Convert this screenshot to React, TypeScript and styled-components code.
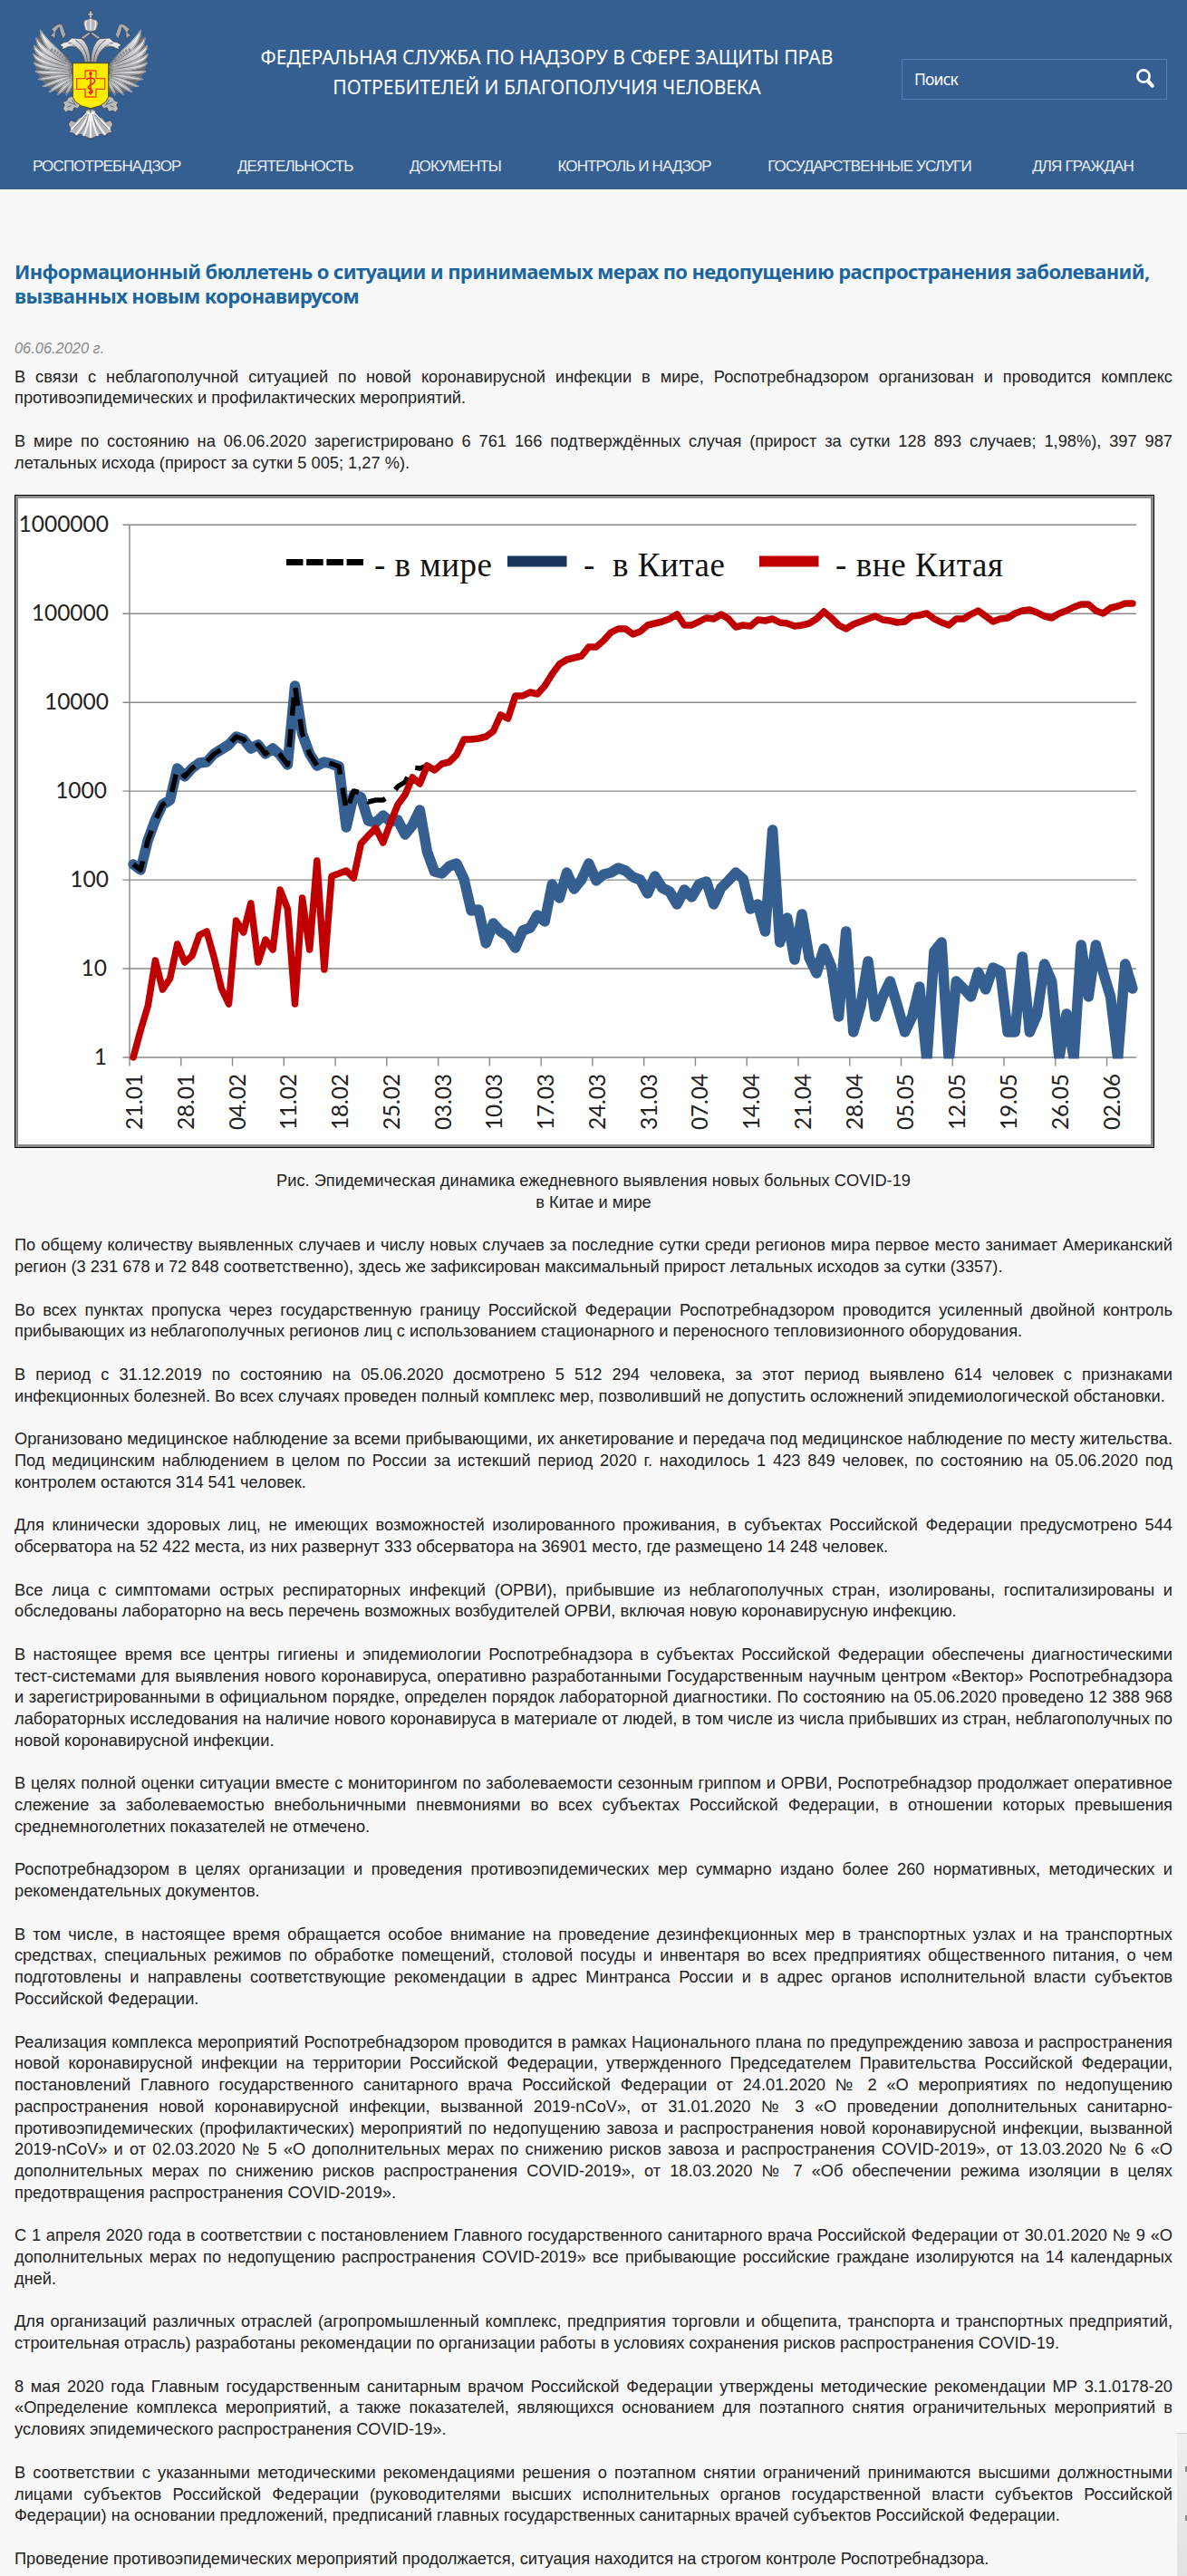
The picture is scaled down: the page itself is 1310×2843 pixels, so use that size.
import React from 'react';
import styled, { createGlobalStyle } from 'styled-components';

const GlobalStyle = createGlobalStyle`
  body {
    margin: 0;
    background: #f8f8f8;
    color: #222;
    font-family: 'Liberation Sans', Arial, sans-serif;
  }
`;

const menu = ['Роспотребнадзор', 'Деятельность', 'Документы', 'Контроль и надзор', 'Государственные услуги', 'Для граждан'];

const intro = [
  'В связи с неблагополучной ситуацией по новой коронавирусной инфекции в мире, Роспотребнадзором организован и проводится комплекс противоэпидемических и профилактических мероприятий.',
  'В мире по состоянию на 06.06.2020 зарегистрировано 6 761 166 подтверждённых случая (прирост за сутки 128 893 случаев; 1,98%), 397 987 летальных исхода (прирост за сутки 5 005; 1,27 %).',
];

const paragraphs = [
  'По общему количеству выявленных случаев и числу новых случаев за последние сутки среди регионов мира первое место занимает Американский регион (3 231 678 и 72 848 соответственно), здесь же зафиксирован максимальный прирост летальных исходов за сутки (3357).',
  'Во всех пунктах пропуска через государственную границу Российской Федерации Роспотребнадзором проводится усиленный двойной контроль прибывающих из неблагополучных регионов лиц с использованием стационарного и переносного тепловизионного оборудования.',
  'В период с 31.12.2019 по состоянию на 05.06.2020 досмотрено 5 512 294 человека, за этот период выявлено 614 человек с признаками инфекционных болезней. Во всех случаях проведен полный комплекс мер, позволивший не допустить осложнений эпидемиологической обстановки.',
  'Организовано медицинское наблюдение за всеми прибывающими, их анкетирование и передача под медицинское наблюдение по месту жительства. Под медицинским наблюдением в целом по России за истекший период 2020 г. находилось 1 423 849 человек, по состоянию на 05.06.2020 под контролем остаются 314 541 человек.',
  'Для клинически здоровых лиц, не имеющих возможностей изолированного проживания, в субъектах Российской Федерации предусмотрено 544 обсерватора на 52 422 места, из них развернут 333 обсерватора на 36901 место, где размещено 14 248 человек.',
  'Все лица с симптомами острых респираторных инфекций (ОРВИ), прибывшие из неблагополучных стран, изолированы, госпитализированы и обследованы лабораторно на весь перечень возможных возбудителей ОРВИ, включая новую коронавирусную инфекцию.',
  'В настоящее время все центры гигиены и эпидемиологии Роспотребнадзора в субъектах Российской Федерации обеспечены диагностическими тест-\u2060системами для выявления нового коронавируса, оперативно разработанными Государственным научным центром «Вектор» Роспотребнадзора и зарегистрированными в официальном порядке, определен порядок лабораторной диагностики. По состоянию на 05.06.2020 проведено 12 388 968 лабораторных исследования на наличие нового коронавируса в материале от людей, в том числе из числа прибывших из стран, неблагополучных по новой коронавирусной инфекции.',
  'В целях полной оценки ситуации вместе с мониторингом по заболеваемости сезонным гриппом и ОРВИ, Роспотребнадзор продолжает оперативное слежение за заболеваемостью внебольничными пневмониями во всех субъектах Российской Федерации, в отношении которых превышения среднемноголетних показателей не отмечено.',
  'Роспотребнадзором в целях организации и проведения противоэпидемических мер суммарно издано более 260 нормативных, методических и рекомендательных документов.',
  'В том числе, в настоящее время обращается особое внимание на проведение дезинфекционных мер в транспортных узлах и на транспортных средствах, специальных режимов по обработке помещений, столовой посуды и инвентаря во всех предприятиях общественного питания, о чем подготовлены и направлены соответствующие рекомендации в адрес Минтранса России и в адрес органов исполнительной власти субъектов Российской Федерации.',
  'Реализация комплекса мероприятий Роспотребнадзором проводится в рамках Национального плана по предупреждению завоза и распространения новой коронавирусной инфекции на территории Российской Федерации, утвержденного Председателем Правительства Российской Федерации, постановлений Главного государственного санитарного врача Российской Федерации от 24.01.2020 № 2 «О мероприятиях по недопущению распространения новой коронавирусной инфекции, вызванной 2019-nCoV», от 31.01.2020 № 3 «О проведении дополнительных санитарно-противоэпидемических (профилактических) мероприятий по недопущению завоза и распространения новой коронавирусной инфекции, вызванной 2019-nCoV» и от 02.03.2020 № 5 «О дополнительных мерах по снижению рисков завоза и распространения COVID-2019», от 13.03.2020 № 6 «О дополнительных мерах по снижению рисков распространения COVID-2019», от 18.03.2020 № 7 «Об обеспечении режима изоляции в целях предотвращения распространения COVID-2019».',
  'С 1 апреля 2020 года в соответствии с постановлением Главного государственного санитарного врача Российской Федерации от 30.01.2020 № 9 «О дополнительных мерах по недопущению распространения COVID-2019» все прибывающие российские граждане изолируются на 14 календарных дней.',
  'Для организаций различных отраслей (агропромышленный комплекс, предприятия торговли и общепита, транспорта и транспортных предприятий, строительная отрасль) разработаны рекомендации по организации работы в условиях сохранения рисков распространения COVID-19.',
  '8 мая 2020 года Главным государственным санитарным врачом Российской Федерации утверждены методические рекомендации МР 3.1.0178-20 «Определение комплекса мероприятий, а также показателей, являющихся основанием для поэтапного снятия ограничительных мероприятий в условиях эпидемического распространения COVID-19».',
  'В соответствии с указанными методическими рекомендациями решения о поэтапном снятии ограничений принимаются высшими должностными лицами субъектов Российской Федерации (руководителями высших исполнительных органов государственной власти субъектов Российской Федерации) на основании предложений, предписаний главных государственных санитарных врачей субъектов Российской Федерации.',
  'Проведение противоэпидемических мероприятий продолжается, ситуация находится на строгом контроле Роспотребнадзора.',
];

// one point per day starting from 21.01, vertical position on the log scale
const china = [
  954, 960, 927, 905, 888, 883, 848, 857, 848, 842, 841, 832, 827, 822, 813, 816, 826, 822, 832, 826, 833, 844, 757, 810,
  832, 845, 841, 843, 846, 913, 877, 880, 906, 908, 900, 907, 905, 921, 911, 894, 940, 962, 964, 956, 953, 970, 1005, 1004,
  1041, 1019, 1028, 1033, 1046, 1027, 1024, 1010, 1017, 976, 991, 963, 981, 971, 953, 972, 965, 963, 958, 961, 968, 971,
  986, 967, 980, 984, 998, 982, 990, 976, 973, 998, 980, 972, 963, 970, 1003, 998, 1028, 916, 1040, 1013, 1059, 1009,
  1057, 1074, 1047, 1067, 1122, 1028, 1139, 1110, 1061, 1122, 1100, 1083, 1110, 1139, 1122, 1089, 1170, 1050, 1040, 1170,
  1083, 1091, 1100, 1073, 1092, 1068, 1072, 1139, 1139, 1056, 1139, 1120, 1064, 1083, 1168, 1119, 1168, 1043, 1100, 1043,
  1073, 1100, 1168, 1064, 1091,
];

const outside = [
  1167, 1137, 1110, 1060, 1092, 1080, 1042, 1062, 1055, 1032, 1028, 1057, 1091, 1108, 1016, 1029, 997, 1062, 1037, 1048,
  982, 1003, 1108, 991, 1048, 950, 1070, 967, 964, 961, 969, 931, 922, 914, 930, 908, 888, 877, 858, 865, 845, 850, 843,
  841, 833, 816, 816, 815, 813, 807, 789, 793, 768, 768, 764, 766, 757, 744, 733, 728, 726, 724, 714, 714, 707, 698, 694,
  694, 700, 697, 690, 688, 686, 683, 678, 690, 690, 686, 682, 683, 678, 683, 692, 690, 691, 684, 685, 683, 687, 688, 691,
  690, 688, 683, 675, 682, 690, 694, 689, 686, 683, 680, 684, 685, 687, 686, 680, 679, 677, 683, 687, 690, 683, 683, 678,
  674, 680, 686, 683, 682, 677, 674, 673, 676, 680, 682, 677, 674, 670, 667, 667, 674, 677, 671, 669, 666, 666,
];

const world = [...china.slice(0, 29), 895, 873, 875, 885, 883, 883, 878, 868, 863, 847, 848, ...outside.slice(40, 46)];

const dates = [
  '21.01', '28.01', '04.02', '11.02', '18.02', '25.02', '03.03', '10.03', '17.03', '24.03',
  '31.03', '07.04', '14.04', '21.04', '28.04', '05.05', '12.05', '19.05', '26.05', '02.06',
];

const PLOT = { left: 143, right: 1254, top: 579.3, bottom: 1167 };
const DAY = (PLOT.right - PLOT.left) / 137;
const DECADE = (PLOT.bottom - PLOT.top) / 6;

const toPoints = (series: number[]) => series.map((y, i) => `${(PLOT.left + (i + 0.5) * DAY).toFixed(1)},${y}`).join(' ');

const EpidemicChart = () => (
  <Chart viewBox="20 550 1250 713">
    <defs>
      <clipPath id="plot">
        <rect x="130" y="560" width="1140" height="608.5" />
      </clipPath>
    </defs>
    {[0, 1, 2, 3, 4, 5, 6].map((power) => {
      const y = PLOT.bottom - power * DECADE;
      return (
        <g key={power}>
          <line className="grid" x1={135.5} x2={PLOT.right} y1={y} y2={y} />
          <text className="scale" x={power === 3 || power < 2 ? 118 : 120} y={y + 8} textAnchor="end">
            {10 ** power}
          </text>
        </g>
      );
    })}
    <line className="grid" x1={PLOT.left} x2={PLOT.left} y1={PLOT.top} y2={PLOT.bottom} />
    {dates.map((date, i) => {
      const x = PLOT.left + i * 7 * DAY;
      return (
        <g key={date}>
          <line className="grid" x1={x} x2={x} y1={PLOT.bottom} y2={PLOT.bottom + 9.5} />
          <text className="scale" transform={`translate(${x + 14} 1185) rotate(-90)`} textAnchor="end" textLength="62">
            {date}
          </text>
        </g>
      );
    })}
    <g clipPath="url(#plot)">
      <polyline className="china" points={toPoints(china)} />
    </g>
    <polyline className="world" points={toPoints(world)} />
    <polyline className="outside" points={toPoints(outside)} />

    <line x1="316" x2="401" y1="620.5" y2="620.5" stroke="#000" strokeWidth="7" strokeDasharray="18.5 3.7" />
    <rect x="560" y="613.5" width="65.5" height="12" fill="#1a365d" />
    <rect x="838" y="613.5" width="65.5" height="12" fill="#c00000" />
    <text className="legend" x="413" y="636" textLength="130">- в мире</text>
    <text className="legend" x="644" y="636">-</text>
    <text className="legend" x="676" y="636" textLength="124">в Китае</text>
    <text className="legend" x="922" y="636" textLength="185">- вне Китая</text>
  </Chart>
);

const feathers = [
  'M74 100 C78 140 108 178 160 206 C152 170 104 150 74 100Z',
  'M60 126 C62 160 100 192 168 214 C150 184 86 172 60 126Z',
  'M53 152 C56 184 100 208 170 222 C150 198 84 190 53 152Z',
  'M51 180 C58 206 104 222 172 230 C150 212 84 208 51 180Z',
  'M53 208 C66 228 110 232 172 238 C150 222 92 224 53 208Z',
  'M58 236 C76 248 118 244 174 246 C150 230 98 238 58 236Z',
  'M68 262 C86 268 130 256 176 250 C150 242 106 252 68 262Z',
  'M82 286 C102 286 140 268 178 254 C150 252 116 268 82 286Z',
  'M104 304 C122 298 152 278 180 258 C154 262 126 282 104 304Z',
  'M132 312 C146 302 166 282 182 264 C162 272 142 292 132 312Z',
  'M160 312 C168 300 178 284 184 268 C172 278 162 298 160 312Z',
];

// left half of the eagle, mirrored for the right one
const EagleHalf = () => (
  <g stroke="#34383f" strokeWidth="2" strokeLinejoin="round">
    <path d="M76 102 Q112 160 152 180 Q180 206 184 240 V300 Q150 318 118 300 Q70 270 56 220 Q48 160 76 102Z" fill="#6b6d72" stroke="none" />
    {feathers.map((d) => (
      <path key={d} d={d} fill="url(#silver)" stroke="#e2e3e5" strokeWidth="4" />
    ))}
    {feathers.map((d) => (
      <path key={d} d={d} fill="none" stroke="#4a4d53" strokeWidth="1.6" />
    ))}
    <path d="M108 164 Q150 180 180 226" fill="none" stroke="#8a8c90" strokeWidth="10" strokeDasharray="7 4" />
    <path d="M106 120 L118 106 L110 96 L128 82 Q146 74 150 92 L158 116 L148 128 L140 108 L136 90 L124 104 L122 132 L116 122Z" fill="#a8abb0" />
    <path d="M219 206 Q214 172 192 158 Q174 148 156 160 L144 164 L148 155 L138 150 Q150 138 164 138 L178 126 L210 128 Q238 148 240 206Z" fill="url(#silver)" />
    <path d="M166 142 L178 144 M190 132 Q224 152 230 204 M180 148 Q214 164 222 204" fill="none" stroke="#686b70" strokeWidth="3" />
    <path d="M208 124 L234 106 L240 112 L216 130Z" fill="#a9abb0" />
    <path d="M180 318 L190 326 L206 346 L198 360 L186 356 L180 370 L166 366 L158 372 L148 360 L154 348 L148 338 L162 332 L164 324Z" fill="#b9bbc0" />
    <path d="M166 338 L188 346 M164 354 L176 350 M178 330 L192 350" fill="none" />
    <path d="M240 360 L222 366 L226 382 L202 390 L190 404 L174 398 L166 412 L174 426 L168 438 L184 442 L192 450 L206 444 L222 452 L240 460Z" fill="#b3b5ba" />
    <path d="M236 370 Q226 402 192 446 M238 374 Q232 420 216 450 M232 370 Q208 398 176 428 M240 374 V456" fill="none" stroke="#f3f3f3" strokeWidth="6" />
    <path d="M233 378 Q226 418 203 444 M228 376 Q210 400 184 426" fill="none" stroke="#606368" />
  </g>
);

const Emblem = () => (
  <EmblemSvg viewBox="0 0 480 480">
    <defs>
      <linearGradient id="silver" x1="0" y1="0" x2="1" y2="1">
        <stop offset="0" stopColor="#fff" />
        <stop offset="1" stopColor="#999ba0" />
      </linearGradient>
    </defs>
    <EagleHalf />
    <g transform="translate(480 0) scale(-1 1)">
      <EagleHalf />
    </g>
    <g stroke="#3b3e44" strokeWidth="2">
      <path d="M236 62 V51 H231 V44 H236 V36 H244 V44 H249 V51 H244 V62Z" fill="#bfc1c5" />
      <path d="M222 100 L216 78 Q216 66 230 64 L240 60 L250 64 Q266 66 265 80 L258 100 Q240 110 222 100Z" fill="#b5b7bb" />
      <path d="M226 68 Q220 80 228 98 M254 68 Q260 80 252 98 M240 62 V100" fill="none" stroke="#eee" strokeWidth="4" />
    </g>
    <path d="M181 209 H299 V322 Q294 338 272 350 L240 359 L208 350 Q186 338 181 322Z" fill="#ffed00" stroke="#4d4a18" strokeWidth="3" />
    <path d="M222 234 H258 V260 H287 V295 H258 V321 H222 V295 H194 V260 H222Z" fill="none" stroke="#f04a12" strokeWidth="4" />
    <circle cx="240" cy="243" r="5" fill="#d30d0d" />
    <path d="M240 242 V314 M226 264 Q234 254 248 260 Q262 268 246 278 Q224 288 236 294 Q252 300 244 307 Q238 312 234 304" fill="none" stroke="#e3200e" strokeWidth="4.5" />
  </EmblemSvg>
);

const App = () => (
  <>
    <GlobalStyle />
    <Header>
      <HeaderTop>
        <Emblem />
        <SiteName>
          Федеральная служба по надзору в сфере защиты прав
          <br />
          потребителей и благополучия человека
        </SiteName>
        <SearchBox>
          <span>Поиск</span>
          <svg width="20" height="21" viewBox="0 0 20 21">
            <circle cx="8" cy="8" r="6.6" fill="none" stroke="#fff" strokeWidth="2.7" />
            <path d="M13 13.5 L17.6 18.6" stroke="#fff" strokeWidth="4.2" strokeLinecap="round" />
          </svg>
        </SearchBox>
      </HeaderTop>
      <Nav>
        {menu.map((item) => (
          <NavItem key={item}>{item}</NavItem>
        ))}
      </Nav>
    </Header>
    <Article>
      <Heading>
        Информационный бюллетень о ситуации и принимаемых мерах по недопущению распространения заболеваний, вызванных новым
        коронавирусом
      </Heading>
      <PublishDate>06.06.2020 г.</PublishDate>
      {intro.map((text) => (
        <Paragraph key={text}>{text}</Paragraph>
      ))}
      <Figure>
        <EpidemicChart />
      </Figure>
      <Caption>
        Рис. Эпидемическая динамика ежедневного выявления новых больных COVID-19
        <br />в Китае и мире
      </Caption>
      {paragraphs.map((text) => (
        <Paragraph key={text}>{text}</Paragraph>
      ))}
    </Article>
    <SideWidget>
      <i />
      <i />
    </SideWidget>
  </>
);

export default App;

const Header = styled.header`
  height: 209px;
  background: #365f91;
  color: #fff;
`;

const HeaderTop = styled.div`
  display: flex;
  height: 160px;
  padding: 0 22px 0 20px;
`;

const EmblemSvg = styled.svg`
  flex: none;
  width: 160px;
  height: 160px;
`;

const SiteName = styled.div`
  flex: 1;
  padding: 46px 0 0 32px;
  font-family: Tahoma, 'Noto Sans', sans-serif;
  font-size: 21.06px;
  line-height: 33px;
  text-align: center;
  text-transform: uppercase;
`;

const SearchBox = styled.div`
  display: flex;
  align-items: center;
  justify-content: space-between;
  box-sizing: border-box;
  width: 293px;
  height: 45px;
  margin-top: 65px;
  padding: 0 13px 2px 13px;
  border: 1px solid #5a7db5;
  font-family: Tahoma, 'Noto Sans', sans-serif;
  font-size: 17.5px;
  letter-spacing: -0.8px;
`;

const Nav = styled.nav`
  display: flex;
  justify-content: space-between;
  padding: 14px 59px 0 36px;
`;

const NavItem = styled.a`
  color: #e8edf3;
  font-size: 17px;
  letter-spacing: -0.86px;
  line-height: 20px;
  text-transform: uppercase;
  white-space: nowrap;

  &:last-child {
    margin-left: 5px;
  }
`;

const Article = styled.main`
  height: 2634px;
  box-sizing: border-box;
  overflow: hidden;
  padding: 77px 16px 0;
`;

const Heading = styled.h1`
  margin: 0 0 33px;
  color: #1b65a0;
  font-family: Tahoma, 'Noto Sans', sans-serif;
  font-size: 22px;
  font-weight: 700;
  letter-spacing: -0.62px;
  line-height: 27px;
`;

const PublishDate = styled.div`
  height: 30.5px;
  color: #888;
  font-size: 16.4px;
  font-style: italic;
  line-height: 23px;
`;

const Paragraph = styled.p`
  margin: 0 0 23.76px;
  font-size: 18.25px;
  letter-spacing: -0.005px;
  line-height: 23.76px;
  text-align: justify;
`;

const Figure = styled.div`
  box-sizing: border-box;
  width: 1258px;
  height: 721px;
  border: 1px solid #000;
  outline: 3px solid #8c8c8c;
  outline-offset: -4px;
  background: #fff;
`;

const Chart = styled.svg`
  display: block;
  width: 1250px;
  height: 713px;
  margin: 3px;

  .grid {
    stroke: #888;
    stroke-width: 1.4;
  }

  .scale {
    fill: #222;
    font-family: Lato, sans-serif;
    font-size: 24.5px;
  }

  .legend {
    fill: #111;
    font-family: 'Liberation Serif', serif;
    font-size: 37px;
  }

  polyline {
    fill: none;
    stroke-linejoin: round;
    stroke-linecap: round;
  }

  .china {
    stroke: #365f91;
    stroke-width: 11.5;
  }

  .outside {
    stroke: #c00000;
    stroke-width: 7.5;
  }

  .world {
    stroke: #000;
    stroke-width: 5.5;
    stroke-linecap: butt;
    stroke-dasharray: 20 15;
  }
`;

const Caption = styled.div`
  margin: 24px 0 23.76px;
  font-size: 18.28px;
  line-height: 23.76px;
  text-align: center;
`;

// counter panel that sticks out of the right edge
const SideWidget = styled.aside`
  position: absolute;
  top: 2685px;
  right: 0;
  width: 11px;
  height: 158px;
  box-sizing: border-box;
  border-top: 1px solid #c9ccd2;
  background: linear-gradient(#efefef, #e2e2e2);

  i {
    display: block;
    width: 2px;
    height: 6px;
    margin: 36px 0 48px 9px;
    background: #888;
  }
`;
